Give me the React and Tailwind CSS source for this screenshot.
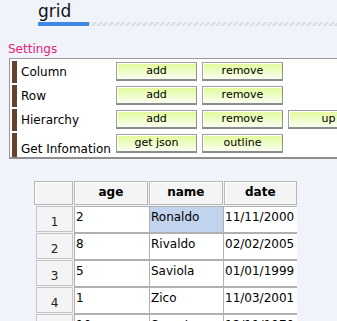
import React from "react";

function Btn({ children, className = "" }) {
  return (
    <div
      className={
        "h-[19px] w-[81px] shrink-0 border border-[#a0a0a0] border-b-2 border-b-[#8c8c8c] border-r-[#909090] bg-gradient-to-b from-[#e2fb98] via-[#edfdc4] to-[#fbfff2] text-[11px] leading-[16px] text-black text-center shadow-[inset_1px_1px_0_#ffffff] " +
        className
      }
    >
      {children}
    </div>
  );
}

function SetRow({ label, children, tall }) {
  return (
    <div className={"flex " + (tall ? "h-[24px]" : "h-[22px]")}>
      <div className="ml-[2px] w-[5px] bg-[#654331] shrink-0" />
      <div
        className={
          "ml-[4px] w-[95px] shrink-0 text-[12px] leading-[14px] text-black whitespace-nowrap " +
          (tall ? "pt-[9px]" : "pt-[4px]")
        }
      >
        {label}
      </div>
      <div className="flex gap-[5px] pt-[1px]">{children}</div>
    </div>
  );
}

const rows = [
  ["1", "2", "Ronaldo", "11/11/2000"],
  ["2", "8", "Rivaldo", "02/02/2005"],
  ["3", "5", "Saviola", "01/01/1999"],
  ["4", "1", "Zico", "11/03/2001"],
  ["5", "10", "Socrates", "12/11/1970"],
];

export default function App() {
  return (
    <div
      className="w-[337px] h-[321px] overflow-hidden bg-[#f0f4fa] text-black"
      style={{ fontFamily: '"DejaVu Sans", Verdana, sans-serif' }}
    >
      <div className="pl-[38px] pt-[1px]">
        <div className="text-[17px] leading-[21px] h-[21px] text-[#111]">grid</div>
        <div className="flex h-[4px]">
          <div className="w-[51px] bg-[#3d8ae2]" />
          <div className="flex-1 bg-[repeating-linear-gradient(135deg,#d9dee6_0px,#d9dee6_2px,#eef1f6_2px,#eef1f6_4px)]" />
        </div>
      </div>
      <div className="mt-[16px] pl-[8px] text-[12px] leading-[14px] text-[#e8207a]">Settings</div>
      <div className="ml-[9px] mt-[2px] w-[400px] border-t border-l border-[#9a9a9a] border-b-2 border-b-[#8e8e8e] bg-white pt-[2px] flex flex-col gap-[2px]">
        <SetRow label="Column">
          <Btn>add</Btn>
          <Btn>remove</Btn>
        </SetRow>
        <SetRow label="Row">
          <Btn>add</Btn>
          <Btn>remove</Btn>
        </SetRow>
        <SetRow label="Hierarchy">
          <Btn>add</Btn>
          <Btn>remove</Btn>
          <Btn>up</Btn>
        </SetRow>
        <SetRow label="Get Infomation" tall>
          <Btn>get json</Btn>
          <Btn>outline</Btn>
        </SetRow>
      </div>
      <div className="ml-[34px] mt-[22px] w-[263px]">
        <div className="flex h-[25px]">
          <div className="w-[39px] h-[24px] border border-[#b8b8b8] bg-[#f4f4f4] shadow-[inset_1px_1px_0_#ffffff]" />
          {["age", "name", "date"].map((h, i) => (
            <div
              key={h}
              className={
                "h-[24px] ml-[1px] border border-[#b8b8b8] bg-[#f4f4f4] shadow-[inset_1px_1px_0_#ffffff] text-center text-[12px] font-bold leading-[20px] " +
                (i === 0 ? "w-[75px]" : "w-[74px]")
              }
            >
              {h}
            </div>
          ))}
        </div>
        {rows.map((r) => (
          <div key={r[0]} className="flex h-[27px]">
            <div className="ml-[2px] w-[37px] h-[26px] border border-[#c4c4c4] bg-[#f4f4f4] text-center text-[12px] leading-[30px] text-[#222]">
              {r[0]}
            </div>
            {r.slice(1).map((c, i) => (
              <div
                key={i}
                className={
                  "h-[27px] border border-[#b0b0b0] border-r-0 overflow-hidden whitespace-nowrap text-[12px] leading-[14px] pt-[3px] pl-[1px] " +
                  (i === 0 ? "w-[75px] ml-[1px]" : "w-[74px]") +
                  (r[0] === "1" && i === 1 ? " bg-[#c2d3ee]" : " bg-white") +
                  (i === 2 ? " border-r" : "")
                }
              >
                {c}
              </div>
            ))}
          </div>
        ))}
      </div>
    </div>
  );
}
